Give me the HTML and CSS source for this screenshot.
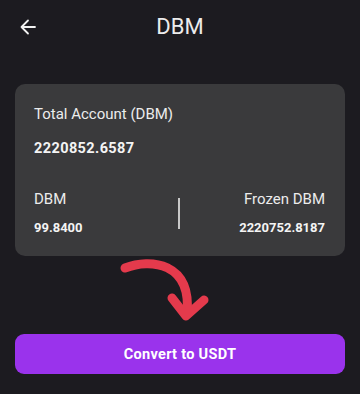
FILE: index.html
```html
<!DOCTYPE html>
<html>
<head>
<meta charset="utf-8">
<link rel="stylesheet" href="styles.css">
</head>
<body>
<header class="topbar">
  <div class="back">
    <svg width="16" height="16" viewBox="0 0 16 16" fill="none" stroke="#f2f2f2" stroke-width="1.8" stroke-linecap="round" stroke-linejoin="round"><path d="M15 8H1.5M8 1.5L1.5 8L8 14.5"/></svg>
  </div>
  <h1 class="title">DBM</h1>
  <div></div>
</header>
<main class="content">
  <section class="card">
    <div class="label">Total Account (DBM)</div>
    <div class="total">2220852.6587</div>
    <div class="split">
      <div class="col">
        <div class="label">DBM</div>
        <div class="value">99.8400</div>
      </div>
      <div class="divider"></div>
      <div class="col right">
        <div class="label">Frozen DBM</div>
        <div class="value">2220752.8187</div>
      </div>
    </div>
  </section>
  <div class="hint">
    <svg width="330" height="78" viewBox="0 0 330 78" fill="none" stroke="#e43a4c" stroke-width="9" stroke-linecap="round" stroke-linejoin="round">
      <path d="M110 12 C 135 2, 177 6, 172 58"/>
      <path d="M157 42 L171 60 L189 44"/>
    </svg>
  </div>
  <button class="convert">Convert to USDT</button>
</main>
</body>
</html>
```
FILE: styles.css
```css
html, body {
  margin: 0;
  padding: 0;
  background: #1c1b20;
  color: #ececec;
  font-family: Roboto, "Liberation Sans", sans-serif;
}
.topbar {
  height: 54px;
  display: grid;
  grid-template-columns: 1fr auto 1fr;
  align-items: center;
  padding: 0 20px;
}
.back {
  display: flex;
  align-items: center;
}
.back svg { display: block; }
.title {
  margin: 0;
  font-size: 22px;
  font-weight: 400;
  color: #ececec;
  line-height: 26px;
}
.content {
  padding: 30px 15px 0;
}
.card {
  background: #3a3a3c;
  border-radius: 10px;
  padding: 20px 20px 19px 19px;
}
.label {
  font-size: 15px;
  line-height: 20px;
  color: #ececec;
}
.total {
  margin-top: 15px;
  font-size: 14.5px;
  font-weight: 700;
  line-height: 20px;
  letter-spacing: 0.4px;
  color: #f4f4f4;
}
.split {
  margin-top: 30px;
  display: grid;
  grid-template-columns: 1fr auto 1fr;
  align-items: center;
}
.col { display: flex; flex-direction: column; gap: 10px; }
.col.right { align-items: flex-end; }
.value {
  font-size: 13px;
  font-weight: 700;
  line-height: 18px;
  color: #f4f4f4;
}
.divider {
  width: 2px;
  height: 31px;
  background: #c8c8c8;
  margin-right: 1px;
}
.hint {
  height: 78px;
}
.hint svg { display: block; }
.convert {
  display: block;
  width: 100%;
  height: 40px;
  border: none;
  border-radius: 9px;
  background: #9a33ec;
  color: #ffffff;
  font-family: Roboto, "Liberation Sans", sans-serif;
  font-size: 14.5px;
  font-weight: 700;
  letter-spacing: 0.3px;
}
```
